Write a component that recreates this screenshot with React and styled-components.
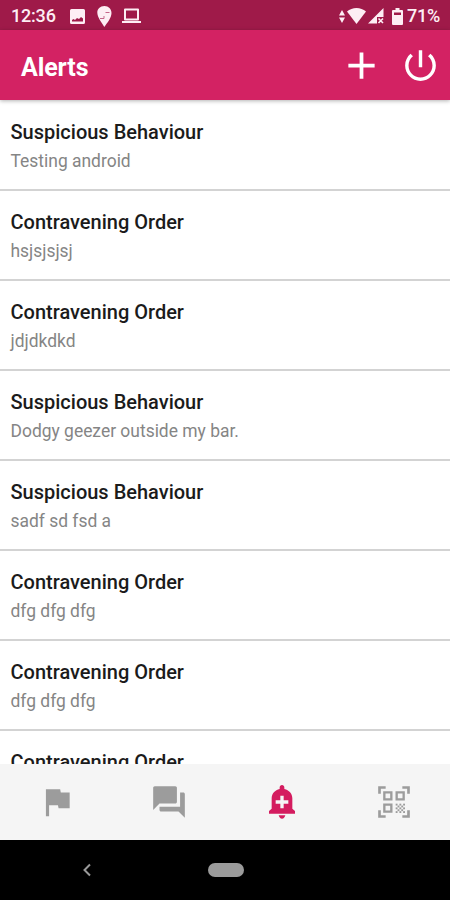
import React from "react";
import styled, { createGlobalStyle } from "styled-components";

const GlobalStyle = createGlobalStyle`
  * { box-sizing: border-box; }
  html, body { margin: 0; padding: 0; background: #fff; }
  body { font-family: Roboto, "Noto Sans", sans-serif; }
`;

const Screen = styled.div`
  width: 450px;
  height: 900px;
  display: flex;
  flex-direction: column;
  overflow: hidden;
  background: #fff;
`;

const StatusBar = styled.div`
  height: 30px;
  flex: none;
  display: flex;
  align-items: center;
  padding: 2px 10px 0 11px;
  background: #9f1a49;
  color: #fdeef4;
`;

const StatusText = styled.span`
  font-size: 18px;
  line-height: 28px;
  font-weight: 500;
  letter-spacing: -0.2px;
  margin-left: ${(p) => p.$gap || 0}px;
  white-space: nowrap;
`;

const StatusIcon = styled.svg`
  display: block;
  flex: none;
  width: ${(p) => p.$w}px;
  height: ${(p) => p.$h}px;
  margin-left: ${(p) => p.$gap || 0}px;
  fill: currentColor;
`;

const StatusGroup = styled.div`
  display: flex;
  align-items: center;
  margin-left: ${(p) => (p.$end ? "auto" : "0")};
`;

const Header = styled.header`
  height: 70px;
  flex: none;
  display: flex;
  align-items: center;
  padding: 0 9px 0 21px;
  background: #d32263;
  color: #fff;
  box-shadow: 0 1px 4px rgba(0, 0, 0, 0.3);
  z-index: 1;
`;

const HeaderTitle = styled.h1`
  margin: 5px auto 0 0;
  font-size: 25px;
  line-height: 32px;
  font-weight: 700;
  letter-spacing: -0.1px;
`;

const HeaderButton = styled.button`
  display: flex;
  padding: 0;
  border: 0;
  background: none;
  color: inherit;
  margin-left: ${(p) => p.$gap || 0}px;
`;

const Icon = styled.svg`
  display: block;
  width: ${(p) => p.$size}px;
  height: ${(p) => p.$size}px;
  fill: currentColor;
`;

const AlertList = styled.ul`
  flex: 1;
  min-height: 0;
  overflow: hidden;
  margin: 0;
  padding: 1px 0 0;
  list-style: none;
`;

const AlertRow = styled.li`
  height: 90px;
  padding: 18px 10.5px 0;
  border-bottom: 2px solid #d3d3d3;
`;

const AlertTitle = styled.div`
  font-size: 20px;
  line-height: 26px;
  font-weight: 500;
  color: #1b1b1b;
  white-space: nowrap;
`;

const AlertText = styled.div`
  margin-top: 4px;
  font-size: 17.45px;
  line-height: 24px;
  color: #858585;
  white-space: nowrap;
`;

const TabBar = styled.nav`
  height: 76px;
  flex: none;
  display: grid;
  grid-template-columns: repeat(4, 1fr);
  background: #f5f5f5;
`;

const Tab = styled.button`
  display: flex;
  align-items: center;
  justify-content: center;
  padding: 0 0 0 1px;
  border: 0;
  background: none;
  color: ${(p) => (p.$active ? "#d41c5f" : "#9c9c9c")};
`;

const SystemNav = styled.div`
  height: 60px;
  flex: none;
  display: grid;
  grid-template-columns: 174px 103px 1fr;
  align-items: center;
  justify-items: center;
  background: #000;
  color: #999;
`;

const HomePill = styled.div`
  width: 36px;
  height: 14px;
  border-radius: 7px;
  background: #9b9b9b;
`;

const alerts = [
  { title: "Suspicious Behaviour", text: "Testing android" },
  { title: "Contravening Order", text: "hsjsjsjsj" },
  { title: "Contravening Order", text: "jdjdkdkd" },
  { title: "Suspicious Behaviour", text: "Dodgy geezer outside my bar." },
  { title: "Suspicious Behaviour", text: "sadf sd fsd a" },
  { title: "Contravening Order", text: "dfg dfg dfg" },
  { title: "Contravening Order", text: "dfg dfg dfg" },
  { title: "Contravening Order" },
];

const FlagIcon = () => (
  <Icon $size={38} viewBox="0 0 24 24">
    <path d="M14.4 6L14 4H5v17h2v-7h5.6l.4 2h7V6z" />
  </Icon>
);

const ForumIcon = () => (
  <Icon $size={38} viewBox="0 0 24 24">
    <path d="M21 6h-2v9H6v2c0 .55.45 1 1 1h11l4 4V7c0-.55-.45-1-1-1zm-4 6V3c0-.55-.45-1-1-1H3c-.55 0-1 .45-1 1v14l4-4h10c.55 0 1-.45 1-1z" />
  </Icon>
);

const BellPlusIcon = () => (
  <Icon $size={38} viewBox="0 0 114 114">
    <path
      fillRule="evenodd"
      d="M57 6c-4 0-7 3-7 7v5C36 21 26 32 26 46v31l-8 7v8h78v-8l-8-7V46c0-14-10-25-24-28v-5c0-4-3-7-7-7zM52 38h10v14h14v10H62v14H52V62H38V52h14z"
    />
    <path d="M47 97h20c-2 7-5 10-10 10s-8-3-10-10z" />
  </Icon>
);

const checker = [
  [0, 0], [2, 0], [4, 0], [1, 1], [3, 1], [0, 2], [2, 2],
  [4, 2], [1, 3], [3, 3], [0, 4], [2, 4], [4, 4],
];

const QrIcon = () => (
  <Icon $size={38} viewBox="0 0 114 114">
    <g fill="none" stroke="currentColor">
      <path strokeWidth="8" d="M13.5 32V13.5H32M82 13.5h18.5V32M13.5 82v18.5H32M82 100.5h18.5V82" />
      <path strokeWidth="7" d="M28 28h21v21H28zM65 28h21v21H65zM28 65h21v21H28z" />
    </g>
    {checker.map(([x, y]) => (
      <rect key={`${x}-${y}`} x={62 + x * 5.6} y={62 + y * 5.6} width="5.6" height="5.6" />
    ))}
  </Icon>
);

const tabs = [
  { name: "Reports", Glyph: FlagIcon },
  { name: "Messages", Glyph: ForumIcon },
  { name: "Alerts", Glyph: BellPlusIcon, active: true },
  { name: "Scan", Glyph: QrIcon },
];

export default function App() {
  return (
    <>
      <GlobalStyle />
      <Screen>
        <StatusBar>
          <StatusGroup>
            <StatusText>12:36</StatusText>
            <StatusIcon $w={15} $h={15} $gap={14} viewBox="0 0 15 15">
              <path fillRule="evenodd" d="M1.5 0h12Q15 0 15 1.5v12q0 1.5-1.5 1.5h-12Q0 15 0 13.5v-12Q0 0 1.5 0zM2 12.500h11v-3L11 8l-2 2-2-1-2 2-1.500-1L2 11z" />
            </StatusIcon>
            <StatusIcon $w={15} $h={21} $gap={12} viewBox="0 0 15 21">
              <path d="M7.5 0C3 0 .3 3 .3 6.5c0 5 4.5 10 7 14.5C10 17 14.5 12 14.5 7c0-4-3-7-7-7z" />
              <path d="M8.5 6.500h4M3 12.5h4V10" fill="none" stroke="#c4668a" strokeWidth="1" />
            </StatusIcon>
            <StatusIcon $w={19} $h={16} $gap={10} viewBox="0 0 19 16">
              <path fillRule="evenodd" d="M3 .5h13q1 0 1 1v10q0 1-1 1H3q-1 0-1-1v-10q0-1 1-1zM4 2.5v8h11v-8z" />
              <path d="M0 13h19v2H0z" />
            </StatusIcon>
          </StatusGroup>
          <StatusGroup $end>
            <StatusIcon $w={6} $h={13} viewBox="0 0 6 13">
              <path d="M3 0l3 5.5H0zM3 13L0 7.5h6z" />
            </StatusIcon>
            <StatusIcon $w={19} $h={16} $gap={2} viewBox="0 0 19 16">
              <path d="M9.5 0C6 0 2.6 1.2 0 3.5L9.5 16 19 3.5C16.4 1.2 13 0 9.5 0z" />
            </StatusIcon>
            <StatusIcon $w={16} $h={16} $gap={2} viewBox="0 0 16 16">
              <path d="M15.5 0v9H9v6.5H0z" />
              <path d="M10.5 10.5l4.5 4.5M15 10.5L10.5 15" stroke="currentColor" strokeWidth="1.6" />
            </StatusIcon>
            <StatusIcon $w={11} $h={17} $gap={8} viewBox="0 0 11 17">
              <path fillRule="evenodd" d="M3.5 0h4v2H10q1 0 1 1v13q0 1-1 1H1q-1 0-1-1V3q0-1 1-1h2.5zM2 4.5v2.5h7V4.5z" />
            </StatusIcon>
            <StatusText $gap={4}>71%</StatusText>
          </StatusGroup>
        </StatusBar>
        <Header>
          <HeaderTitle>Alerts</HeaderTitle>
          <HeaderButton aria-label="Add alert">
            <Icon $size={45} viewBox="0 0 24 24">
              <path d="M19 13h-6v6h-2v-6H5v-2h6V5h2v6h6z" />
            </Icon>
          </HeaderButton>
          <HeaderButton aria-label="Sign out" $gap={16}>
            <Icon $size={41} viewBox="0 0 24 24">
              <path d="M13 3h-2v10h2V3zm4.83 2.17l-1.42 1.42C17.99 7.86 19 9.81 19 12c0 3.87-3.13 7-7 7s-7-3.13-7-7c0-2.19 1.01-4.14 2.58-5.42L6.17 5.17C4.23 6.82 3 9.26 3 12c0 4.97 4.03 9 9 9s9-4.03 9-9c0-2.74-1.23-5.18-3.17-6.83z" />
            </Icon>
          </HeaderButton>
        </Header>
        <AlertList>
          {alerts.map((alert, i) => (
            <AlertRow key={i}>
              <AlertTitle>{alert.title}</AlertTitle>
              {alert.text && <AlertText>{alert.text}</AlertText>}
            </AlertRow>
          ))}
        </AlertList>
        <TabBar>
          {tabs.map(({ name, Glyph, active }) => (
            <Tab key={name} aria-label={name} $active={active}>
              <Glyph />
            </Tab>
          ))}
        </TabBar>
        <SystemNav>
          <StatusIcon $w={8} $h={14} viewBox="0 0 8 14">
            <path d="M7 1.5L1.5 7 7 12.5" fill="none" stroke="currentColor" strokeWidth="2" />
          </StatusIcon>
          <HomePill />
        </SystemNav>
      </Screen>
    </>
  );
}
